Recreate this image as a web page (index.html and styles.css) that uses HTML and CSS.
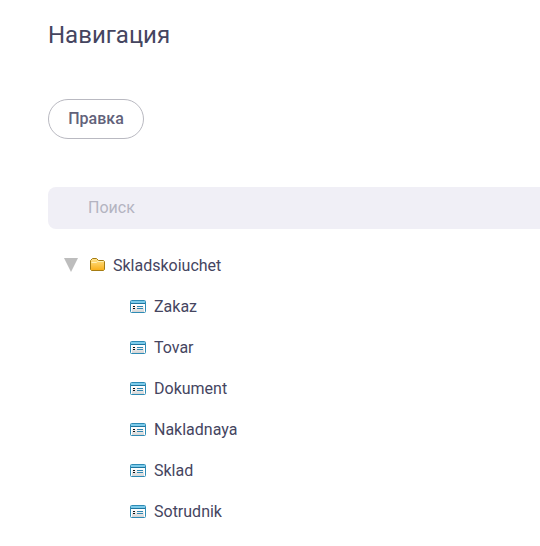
FILE: index.html
```html
<!DOCTYPE html>
<html lang="ru">
<head>
<meta charset="utf-8">
<title>Навигация</title>
<link rel="stylesheet" href="styles.css">
</head>
<body>
<svg width="0" height="0" class="defs" aria-hidden="true">
  <defs>
    <linearGradient id="gold" x1="0" y1="0" x2="0" y2="1"><stop offset="0" stop-color="#ffe591"/><stop offset="1" stop-color="#f9ae17"/></linearGradient>
    <linearGradient id="pane" x1="0" y1="0" x2="0" y2="1"><stop offset="0" stop-color="#fff"/><stop offset="1" stop-color="#d4d4d4"/></linearGradient>
    <symbol id="form" viewBox="0 0 16 13">
      <rect x=".5" y=".5" width="15" height="12" rx="1" fill="#fff" stroke="#2e8bb5"/>
      <path d="M1 1h14v2H1z" fill="#7ccbea"/>
      <path d="M1 3h14v1H1z" fill="#20759f"/>
      <path d="M2 5h12v7H2z" fill="url(#pane)"/>
      <path d="M3 6h2v1H3zM3 8h2v1H3z" fill="#111"/>
      <path d="M7 6h6v1H7zM7 8h6v1H7z" fill="#3088b2"/>
    </symbol>
  </defs>
</svg>
<main class="page">
  <h1 class="title">Навигация</h1>
  <button class="edit">Правка</button>
  <input class="search" type="text" placeholder="Поиск">
  <div class="tree">
    <div class="row root">
      <svg class="arrow" width="14" height="14" viewBox="0 0 14 14"><path d="M0 0h14L7 14z" fill="#bdbdbd"/></svg>
      <svg class="folder" width="15" height="13" viewBox="0 0 15 13"><path d="M.5 2.5 2.5.5h4l2 2h5l1 1v8l-1 1h-12l-1-1z" fill="url(#gold)" stroke="#a57c13"/><path d="M1.5 4.5h5l1-1h6" fill="none" stroke="#fff0b5"/></svg>
      <span>Skladskoiuchet</span>
    </div>
    <div class="row"><svg class="form"><use href="#form"/></svg><span>Zakaz</span></div>
    <div class="row"><svg class="form"><use href="#form"/></svg><span>Tovar</span></div>
    <div class="row"><svg class="form"><use href="#form"/></svg><span>Dokument</span></div>
    <div class="row"><svg class="form"><use href="#form"/></svg><span>Nakladnaya</span></div>
    <div class="row"><svg class="form"><use href="#form"/></svg><span>Sklad</span></div>
    <div class="row"><svg class="form"><use href="#form"/></svg><span>Sotrudnik</span></div>
  </div>
</main>
</body>
</html>
```
FILE: styles.css
```css
* { box-sizing: border-box; }
body {
  margin: 0;
  background: #fff;
  color: #45455f;
  font: 16px/24px Roboto, sans-serif;
  overflow: hidden;
}
.defs { display: block; }
.page {
  display: flex;
  flex-direction: column;
  align-items: flex-start;
  padding: 19px 0 0 48px;
}
.title {
  margin: 0 0 48px;
  font-size: 24px;
  line-height: 32px;
  font-weight: 400;
}
.edit {
  width: 96px;
  height: 40px;
  margin-bottom: 48px;
  padding: 0;
  border: 1px solid #b9b9c1;
  border-radius: 20px;
  background: #fff;
  color: #62627a;
  font: 500 16px/24px Roboto, sans-serif;
}
.search {
  width: 100%;
  height: 42px;
  margin-bottom: 16px;
  padding: 0 40px 2px;
  border: 0;
  border-radius: 8px 0 0 8px;
  background: #f0eff6;
  font: 16px/24px Roboto, sans-serif;
}
.search::placeholder { color: #b4b4c1; opacity: 1; }
.row {
  display: flex;
  align-items: center;
  height: 41px;
  padding-left: 82px;
}
.root { padding-left: 16px; }
.arrow { margin: 0 12px 2px 0; }
.folder { margin: 0 8px 2px 0; }
.form { width: 16px; height: 13px; margin-right: 8px; }
```
